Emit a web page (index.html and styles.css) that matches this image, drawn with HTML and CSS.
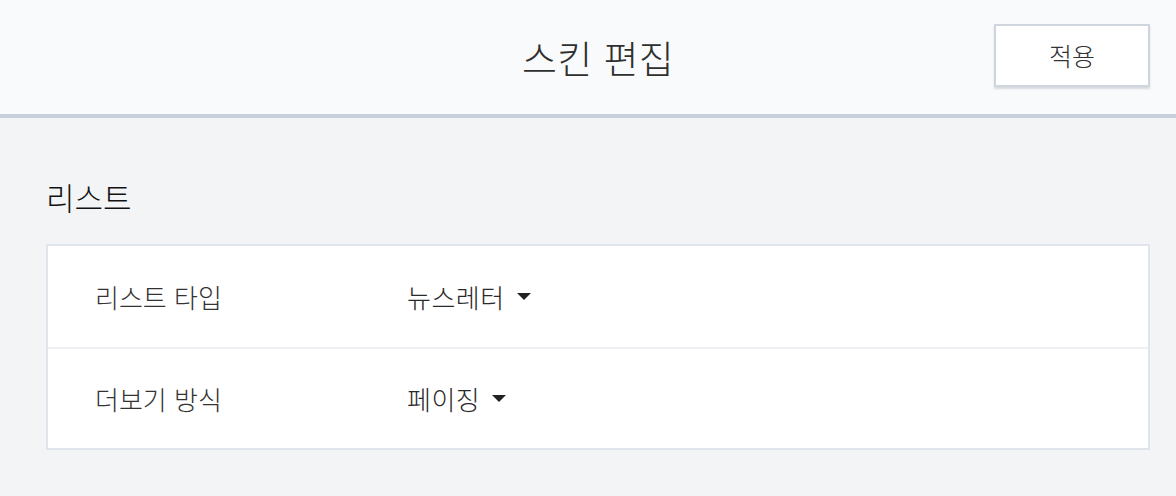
FILE: index.html
```html
<!DOCTYPE html>
<html lang="ko">
<head>
<meta charset="utf-8">
<title>스킨 편집</title>
<link rel="stylesheet" href="styles.css">
</head>
<body>
<header class="topbar">
  <div class="spacer"></div>
  <h1 class="title">스킨 편집</h1>
  <div class="actions"><button class="apply-btn" type="button">적용</button></div>
</header>
<main class="content">
  <h2 class="section-title">리스트</h2>
  <div class="card">
    <div class="row">
      <div class="label">리스트 타입</div>
      <div class="value">뉴스레터<span class="caret"></span></div>
    </div>
    <div class="row">
      <div class="label">더보기 방식</div>
      <div class="value">페이징<span class="caret"></span></div>
    </div>
  </div>
</main>
</body>
</html>
```
FILE: styles.css
```css
* { box-sizing: border-box; }
html, body {
  margin: 0;
  padding: 0;
}
body {
  width: 1176px;
  height: 496px;
  overflow: hidden;
  background: #f3f4f6;
  font-family: "Noto Sans CJK KR", "Noto Sans", sans-serif;
  font-weight: 300;
  color: #333;
}
.topbar {
  height: 118px;
  background: #f9fafb;
  border-bottom: 4px solid #c9d0d9;
  display: grid;
  grid-template-columns: 1fr auto 1fr;
  align-items: center;
  padding: 0 26px 0 46px;
}
.title {
  margin: 0;
  font-size: 38px;
  font-weight: 300;
  color: #2f2f2f;
  line-height: 48px;
  letter-spacing: 0.3px;
}
.actions {
  display: flex;
  justify-content: flex-end;
}
.apply-btn {
  width: 156px;
  height: 63px;
  margin-top: -4px;
  background: #fff;
  border: 2px solid #cfd5dd;
  border-radius: 1px;
  box-shadow: 0 2px 2px rgba(150, 160, 175, 0.35);
  font-family: inherit;
  font-weight: 300;
  font-size: 25px;
  color: #333;
  padding: 0;
}
.content {
  padding: 59px 26px 0 46px;
}
.section-title {
  margin: 0 0 27px 0;
  font-size: 31px;
  font-weight: 300;
  line-height: 40px;
  color: #111;
}
.card {
  background: #fff;
  border: 2px solid #e0e4eb;
}
.row {
  height: 101px;
  display: flex;
  align-items: center;
  padding-left: 47px;
  font-size: 26px;
  color: #333;
}
.row + .row {
  border-top: 2px solid #eef0f4;
  height: 101px;
}
.label {
  width: 312px;
}
.value {
  display: flex;
  align-items: center;
  color: #2a2a2a;
  letter-spacing: 0.5px;
}
.caret {
  display: inline-block;
  width: 0;
  height: 0;
  margin-left: 12px;
  border-left: 7px solid transparent;
  border-right: 7px solid transparent;
  border-top: 7px solid #222;
}
```
